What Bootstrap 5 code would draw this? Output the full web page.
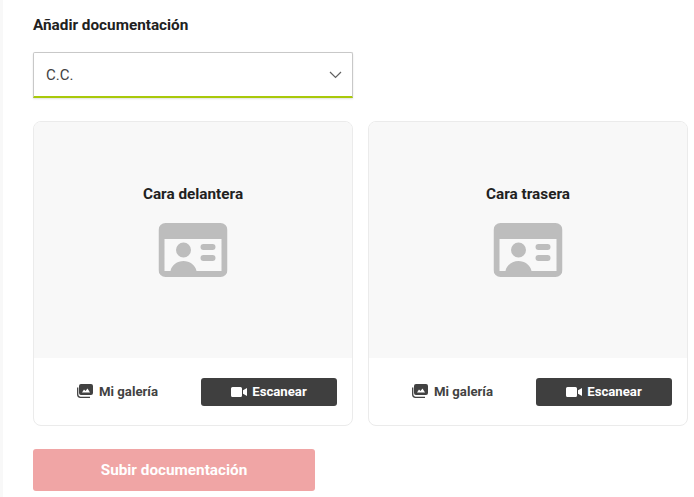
<!DOCTYPE html>
<html lang="es">

<head>
  <meta charset="UTF-8">
  <meta name="viewport" content="width=device-width, initial-scale=1.0">
  <title>Añadir documentación</title>
  <link href="https://cdn.jsdelivr.net/npm/bootstrap@5.3.0/dist/css/bootstrap.min.css" rel="stylesheet">
  <style>
    html, body { height: 497px; overflow: hidden; }
    body { font-family: Roboto, "Liberation Sans", sans-serif; color: #212121; background: #fff; }
    .doc-page { border-left: 3px solid #f8f8f8; height: 497px; padding: 17px 0 0 30px; }
    .doc-title { font-size: 15.3px; font-weight: 700; line-height: 17px; margin: 0 0 18px; }
    .doc-select { width: 320px; height: 46px; border: 1px solid #c8c8c8; border-bottom: 2px solid #a9c90a; border-radius: 2px 2px 0 0; padding: 1px 10px 0 12px; font-size: 15px; color: #424242; box-shadow: 0 1px 2px rgba(0,0,0,.12); }
    .doc-sides { gap: 15px; margin-top: 23px; }
    .doc-side { width: 320px; height: 305px; border: 1px solid #ebebeb; border-radius: 8px; overflow: hidden; }
    .doc-preview { height: 236px; background: #f8f8f8; padding-top: 64px; }
    .doc-side-name { font-size: 15.3px; font-weight: 700; line-height: 17px; margin-bottom: 20px; }
    .doc-id-icon { display: block; margin: 0 auto; transform: translateX(-.5px); }
    .doc-actions { height: 67px; padding: 0 15px 0 43px; }
    .doc-gallery { font-size: 13.2px; font-weight: 700; color: #424242; gap: 6px; width: 124px; }
    .doc-scan { width: 136px; height: 28px; background: #3f3f3f; border-radius: 3px; color: #fff; font-size: 13.2px; font-weight: 700; gap: 5px; }
    .doc-submit { width: 282px; height: 42px; margin-top: 23px; background: #f0a5a5; border-radius: 3px; color: #fff; font-size: 15.3px; font-weight: 700; }
  </style>
</head>

<body>
  <div class="doc-page">
    <h1 class="doc-title">Añadir documentación</h1>
    <div class="doc-select d-flex align-items-center justify-content-between">
      <span>C.C.</span>
      <svg width="13" height="8" viewBox="0 0 13 8"><path d="M1 1l5.500 5.500L12 1" fill="none" stroke="#616161" stroke-width="1.200"/></svg>
    </div>
    <div class="doc-sides d-flex">
      <div class="doc-side">
        <div class="doc-preview text-center">
          <div class="doc-side-name">Cara delantera</div>
          <svg class="doc-id-icon" width="69" height="54" viewBox="0 0 69 54"><path fill="#bdbdbd" fill-rule="evenodd" d="M7 0h55a7 7 0 0 1 7 7v40a7 7 0 0 1-7 7H7a7 7 0 0 1-7-7V7a7 7 0 0 1 7-7zM6 16v32h6c1-6 7-10 13-10s12 4 13 10h25V16zM25 19.500a7.500 7.500 0 1 1 0 15 7.500 7.500 0 0 1 0-15zM45 21h9a3 3 0 0 1 0 6h-9a3 3 0 0 1 0-6zM45 32h9a3 3 0 0 1 0 6h-9a3 3 0 0 1 0-6z"/></svg>
        </div>
        <div class="doc-actions d-flex align-items-center">
          <div class="doc-gallery d-flex align-items-center">
            <svg width="16" height="14" viewBox="0 0 16 14"><path fill="#424242" fill-rule="evenodd" d="M4 0h10a2 2 0 0 1 2 2v7a2 2 0 0 1-2 2H4a2 2 0 0 1-2-2V2a2 2 0 0 1 2-2zM5 8.500h8L10.500 4.500 8.500 7 7 5.500z"/><path fill="none" stroke="#424242" stroke-width="1.300" d="M.7 3.500v7a2.800 2.800 0 0 0 2.800 2.800H13"/></svg>
            <span>Mi galería</span>
          </div>
          <div class="doc-scan d-flex align-items-center justify-content-center">
            <svg width="16" height="10" viewBox="0 0 16 10"><path fill="#fff" d="M1.500 0h8A1.500 1.500 0 0 1 11 1.500v7A1.500 1.500 0 0 1 9.500 10h-8A1.500 1.500 0 0 1 0 8.500v-7A1.500 1.500 0 0 1 1.500 0zM12 3.200L16 1v8l-4-2.200z"/></svg>
            <span>Escanear</span>
          </div>
        </div>
      </div>
      <div class="doc-side">
        <div class="doc-preview text-center">
          <div class="doc-side-name">Cara trasera</div>
          <svg class="doc-id-icon" width="69" height="54" viewBox="0 0 69 54"><path fill="#bdbdbd" fill-rule="evenodd" d="M7 0h55a7 7 0 0 1 7 7v40a7 7 0 0 1-7 7H7a7 7 0 0 1-7-7V7a7 7 0 0 1 7-7zM6 16v32h6c1-6 7-10 13-10s12 4 13 10h25V16zM25 19.500a7.500 7.500 0 1 1 0 15 7.500 7.500 0 0 1 0-15zM45 21h9a3 3 0 0 1 0 6h-9a3 3 0 0 1 0-6zM45 32h9a3 3 0 0 1 0 6h-9a3 3 0 0 1 0-6z"/></svg>
        </div>
        <div class="doc-actions d-flex align-items-center">
          <div class="doc-gallery d-flex align-items-center">
            <svg width="16" height="14" viewBox="0 0 16 14"><path fill="#424242" fill-rule="evenodd" d="M4 0h10a2 2 0 0 1 2 2v7a2 2 0 0 1-2 2H4a2 2 0 0 1-2-2V2a2 2 0 0 1 2-2zM5 8.500h8L10.500 4.500 8.500 7 7 5.500z"/><path fill="none" stroke="#424242" stroke-width="1.300" d="M.7 3.500v7a2.800 2.800 0 0 0 2.800 2.800H13"/></svg>
            <span>Mi galería</span>
          </div>
          <div class="doc-scan d-flex align-items-center justify-content-center">
            <svg width="16" height="10" viewBox="0 0 16 10"><path fill="#fff" d="M1.500 0h8A1.500 1.500 0 0 1 11 1.500v7A1.500 1.500 0 0 1 9.500 10h-8A1.500 1.500 0 0 1 0 8.500v-7A1.500 1.500 0 0 1 1.500 0zM12 3.200L16 1v8l-4-2.200z"/></svg>
            <span>Escanear</span>
          </div>
        </div>
      </div>
    </div>
    <div class="doc-submit d-flex align-items-center justify-content-center">Subir documentación</div>
  </div>
  <script src="https://cdn.jsdelivr.net/npm/bootstrap@5.3.0/dist/js/bootstrap.bundle.min.js"></script>
</body>

</html>
